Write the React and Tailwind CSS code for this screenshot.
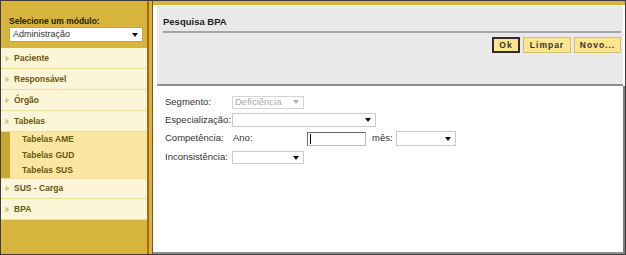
export default function App() {
  const item = "flex items-center h-[21px] border-b border-[#eedf9e] bg-[#fdf5d8] text-[#6a5810] font-bold text-[8.5px] pl-[4px]";
  const sub = "flex items-center border-b border-[#f6e6a8] bg-[#fbe7a2] text-[#6a5810] font-bold text-[8.5px] pl-[12px]";
  const Tri = () => (
    <svg width="5" height="7" viewBox="0 0 5 7" className="mr-[4px]"><path d="M0.5 0.5 L4.5 3.5 L0.5 6.5 Z" fill="#cfc68a" /></svg>
  );
  const Arrow = ({ c = "#111" }) => (
    <svg width="6" height="4" viewBox="0 0 6 4"><path d="M0 0 H6 L3 4 Z" fill={c} /></svg>
  );
  return (
    <div className="w-[626px] h-[255px] border border-[#3c3c3c] flex bg-white overflow-hidden" style={{ fontFamily: "'Liberation Sans', Arial, sans-serif" }}>
      <div className="w-[146px] bg-[#d6b43e] flex flex-col">
        <div className="h-[47px] pl-[8px] pr-[4px] pt-[15px]">
          <div className="text-[8.5px] font-bold text-[#2a2000] leading-[10px]">Selecione um módulo:</div>
          <div className="mt-[1px] h-[15px] bg-white border border-[#c9a830] flex items-center justify-between pl-[3px] pr-[4px]">
            <span className="text-[9px] text-[#333]">Administração</span>
            <Arrow />
          </div>
        </div>
        <div>
          <div className={item}><Tri />Paciente</div>
          <div className={item}><Tri />Responsável</div>
          <div className={item}><Tri />Órgão</div>
          <div className={item}><Tri />Tabelas</div>
          <div className="border-l-[9px] border-[#c9a632]">
            <div className={sub + " h-[16px]"}>Tabelas AME</div>
            <div className={sub + " h-[15px]"}>Tabelas GUD</div>
            <div className={sub + " h-[15px] border-b-0"}>Tabelas SUS</div>
          </div>
          <div className={item + " border-t border-t-[#eedf9e]"}><Tri />SUS - Carga</div>
          <div className={item}><Tri />BPA</div>
        </div>
      </div>
      <div className="w-[2px] bg-[#a8680c]"></div>
      <div className="w-[3px] bg-[#d6b43e]"></div>
      <div className="w-[1px] bg-[#6b5a30]"></div>
      <div className="flex-1 flex flex-col">
        <div className="h-[4px] bg-[#d6b43e]"></div>
        <div className="h-[1px] bg-[#fff6c8]"></div>
        <div className="pl-[4px] pr-[2px]">
          <div className="h-[80px] bg-[#e9e9e9] border-b-2 border-[#8f8f8f] pl-[6px] pr-[2px] pt-[10px]">
            <div className="text-[9.5px] font-bold text-[#1e1e1e] leading-[11px] pb-[4px] border-b-2 border-[#a5a5a5]">Pesquisa BPA</div>
            <div className="flex justify-end gap-[3px] mt-[4px]">
              <div className="w-[28px] h-[16px] bg-[#fde48e] border-2 border-[#2e2e2e] text-[8.5px] font-bold text-[#333] flex items-center justify-center tracking-[1px]">Ok</div>
              <div className="w-[48px] h-[16px] bg-[#fde48e] border border-[#d4bd74] text-[8.5px] font-bold text-[#333] flex items-center justify-center tracking-[1px]">Limpar</div>
              <div className="w-[47px] h-[16px] bg-[#fde48e] border border-[#d4bd74] text-[8.5px] font-bold text-[#333] flex items-center justify-center tracking-[1px]">Novo...</div>
            </div>
          </div>
        </div>
        <div className="flex-1 border-r-2 border-[#7a7a7a] border-b-2 border-b-[#8f8f8f] pl-[12px] pt-[7px] text-[9.5px] text-[#333]">
          <div className="flex items-center h-[18px]">
            <span className="w-[67px]">Segmento:</span>
            <div className="w-[72px] h-[13px] border border-[#d4d4d4] bg-white flex items-center justify-between pl-[2px] pr-[4px]">
              <span className="text-[#a8a8a8]">Deficiência</span>
              <Arrow c="#b0b0b0" />
            </div>
          </div>
          <div className="flex items-center h-[18px]">
            <span className="w-[67px]">Especialização:</span>
            <div className="w-[144px] h-[14px] border border-[#cacaca] bg-white flex items-center justify-end pr-[4px]">
              <Arrow />
            </div>
          </div>
          <div className="flex items-center h-[19px]">
            <span className="w-[68px]">Competência:</span>
            <span className="w-[74px]">Ano:</span>
            <div className="w-[59px] h-[14px] border border-[#b8b8b8] border-t-[#6a6a6a] border-l-[#6a6a6a] bg-white flex items-center pl-[2px]">
              <div className="w-[1px] h-[10px] bg-black"></div>
            </div>
            <span className="ml-[6px] w-[24px]">mês:</span>
            <div className="w-[60px] h-[15px] border border-[#cacaca] bg-white flex items-center justify-end pr-[4px]">
              <Arrow />
            </div>
          </div>
          <div className="flex items-center h-[19px]">
            <span className="w-[67px]">Inconsistência:</span>
            <div className="w-[72px] h-[13px] border border-[#cacaca] bg-white flex items-center justify-end pr-[4px]">
              <Arrow />
            </div>
          </div>
        </div>
      </div>
    </div>
  );
}
